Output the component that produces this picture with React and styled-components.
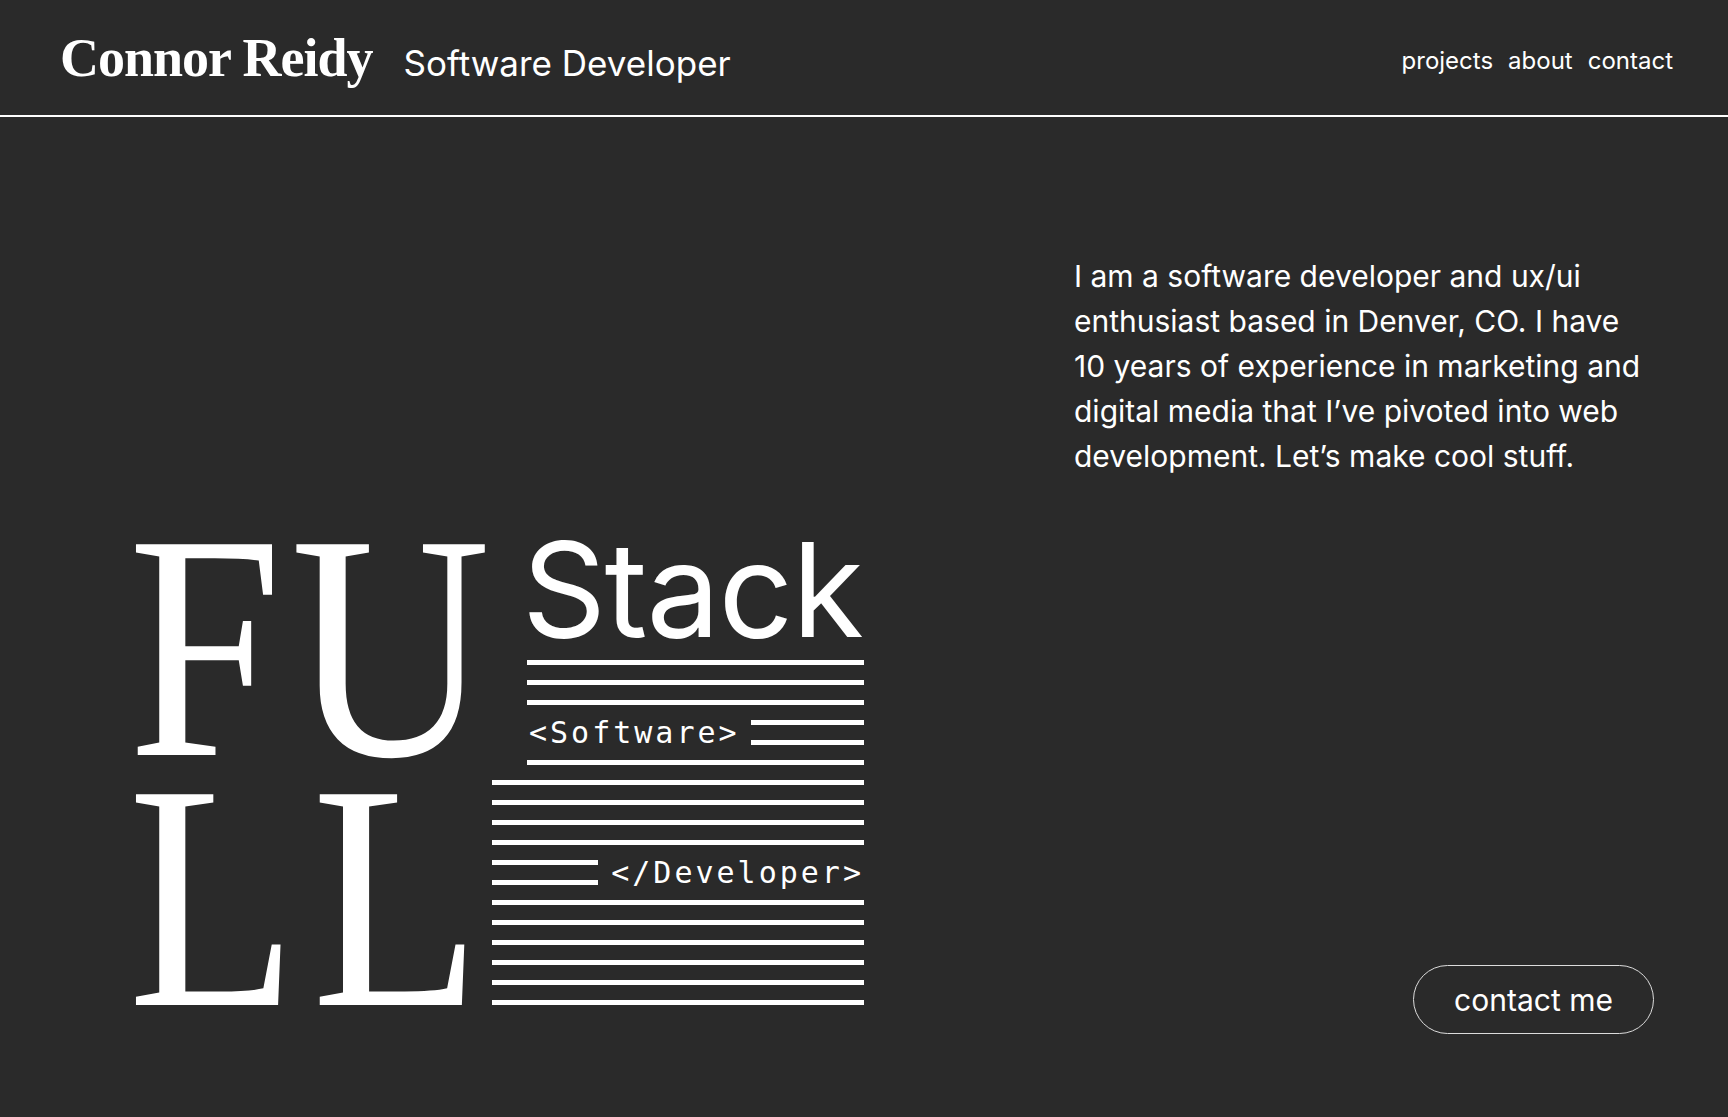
import React from "react";
import styled, { createGlobalStyle } from "styled-components";

const GlobalStyle = createGlobalStyle`
  html, body {
    margin: 0;
    padding: 0;
    background: #2a2a2a;
    color: #ffffff;
    font-family: Inter, "Noto Sans", sans-serif;
  }
  * {
    box-sizing: border-box;
  }
`;

function LineBlock({ before, after, text, barsLeft, width }) {
  return (
    <Lines $width={width}>
      {Array.from({ length: before }).map((_, i) => (
        <Bar key={"b" + i} />
      ))}
      <TextRow>
        {barsLeft && (
          <ShortBars>
            <Bar />
            <Bar />
          </ShortBars>
        )}
        <Code>{text}</Code>
        {!barsLeft && (
          <ShortBars>
            <Bar />
            <Bar />
          </ShortBars>
        )}
      </TextRow>
      {Array.from({ length: after }).map((_, i) => (
        <Bar key={"a" + i} />
      ))}
    </Lines>
  );
}

function App() {
  return (
    <>
      <GlobalStyle />
      <Header>
        <Brand>
          <Name>Connor Reidy</Name>
          <Role>Software Developer</Role>
        </Brand>
        <Nav>
          <NavLink>projects</NavLink>
          <NavLink>about</NavLink>
          <NavLink>contact</NavLink>
        </Nav>
      </Header>
      <Main>
        <Graphic>
          <GraphicRow>
            <BigWord $width={399} $top={10} $tracking={10}>
              FU
            </BigWord>
            <StackColumn>
              <StackWord>Stack</StackWord>
              <LineBlock before={3} after={1} text="<Software>" width={337} />
            </StackColumn>
          </GraphicRow>
          <GraphicRow $gap={15}>
            <BigWord $width={364} $top={4} $tracking={17}>
              LL
            </BigWord>
            <LineBlock
              before={4}
              after={6}
              text="</Developer>"
              width={372}
              barsLeft
            />
          </GraphicRow>
        </Graphic>
        <Aside>
          <Intro>
            I am a software developer and ux/ui
            <br />
            enthusiast based in Denver, CO. I have
            <br />
            10 years of experience in marketing and
            <br />
            digital media that I’ve pivoted into web
            <br />
            development. Let’s make cool stuff.
          </Intro>
          <ContactButton>contact me</ContactButton>
        </Aside>
      </Main>
    </>
  );
}

export default App;

const Header = styled.header`
  display: flex;
  justify-content: space-between;
  align-items: center;
  height: 117px;
  padding: 0 55px 0 60px;
  border-bottom: 2px solid #ffffff;
`;

const Brand = styled.div`
  display: flex;
  align-items: baseline;
  gap: 31px;
`;

const Name = styled.div`
  font-family: "Liberation Serif", "DejaVu Serif", serif;
  font-weight: 700;
  font-size: 54px;
  line-height: 1;
  letter-spacing: -1px;
`;

const Role = styled.div`
  font-size: 35px;
  line-height: 1;
`;

const Nav = styled.nav`
  display: flex;
  gap: 15px;
  margin-top: 6px;
`;

const NavLink = styled.a`
  font-size: 24px;
  line-height: 1;
  color: #ffffff;
  cursor: pointer;
`;

const Main = styled.main`
  display: grid;
  grid-template-columns: 1fr 580px;
  padding: 137px 74px 0 128px;
`;

const Graphic = styled.div`
  margin-top: 270px;
  display: flex;
  flex-direction: column;
`;

const GraphicRow = styled.div`
  display: flex;
  align-items: flex-start;
  margin-top: ${({ $gap }) => $gap || 0}px;
`;

const BigWord = styled.div`
  width: ${({ $width }) => $width}px;
  margin-top: ${({ $top }) => $top}px;
  flex-shrink: 0;
  font-family: "Liberation Serif", "DejaVu Serif", serif;
  font-size: 322px;
  line-height: 0.7;
  letter-spacing: ${({ $tracking }) => $tracking}px;
  white-space: nowrap;
  transform: scaleX(0.86);
  transform-origin: left center;
`;

const StackColumn = styled.div`
  width: 337px;
  display: flex;
  flex-direction: column;
  gap: 5px;
`;

const StackWord = styled.div`
  font-size: 131px;
  line-height: 1;
  letter-spacing: -1.5px;
  margin-left: -5px;
`;

const Lines = styled.div`
  display: flex;
  flex-direction: column;
  gap: 15px;
  width: ${({ $width }) => $width}px;
  flex-shrink: 0;
`;

const Bar = styled.div`
  height: 5px;
  background: #ffffff;
`;

const TextRow = styled.div`
  display: flex;
  align-items: stretch;
  gap: 11px;
  height: 25px;
`;

const ShortBars = styled.div`
  flex: 1;
  display: flex;
  flex-direction: column;
  justify-content: space-between;
`;

const Code = styled.div`
  font-family: "DejaVu Sans Mono", "Liberation Mono", monospace;
  font-size: 30px;
  line-height: 25px;
  letter-spacing: 3px;
  white-space: nowrap;
  padding-left: 2px;
`;

const Aside = styled.div`
  display: flex;
  flex-direction: column;
`;

const Intro = styled.p`
  margin: 0;
  font-size: 30px;
  line-height: 45px;
  white-space: nowrap;
`;

const ContactButton = styled.button`
  align-self: flex-end;
  margin-top: 486px;
  width: 241px;
  height: 69px;
  border: 1.5px solid #dcdcdc;
  border-radius: 35px;
  background: transparent;
  color: #ffffff;
  font-family: Inter, "Noto Sans", sans-serif;
  font-size: 30px;
  cursor: pointer;
`;
